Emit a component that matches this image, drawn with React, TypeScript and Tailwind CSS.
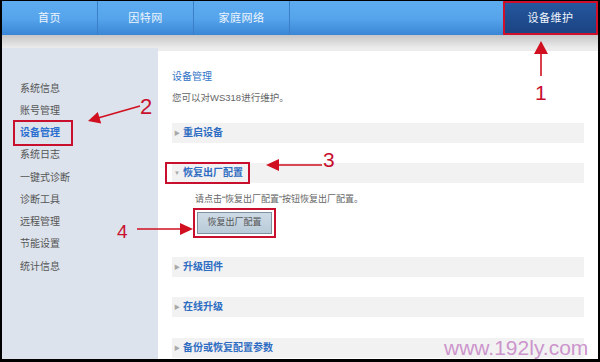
import React from "react";

const sideItems = [
  "系统信息",
  "账号管理",
  "设备管理",
  "系统日志",
  "一键式诊断",
  "诊断工具",
  "远程管理",
  "节能设置",
  "统计信息",
];

function Bar({ label, open, mt, boxed }: { label: string; open?: boolean; mt: string; boxed?: boolean }) {
  return (
    <div className={`relative h-[20px] bg-[#f2f2f2] flex items-center pl-[2px] ${mt}`}>
      <span className="text-[#a8a8a8] text-[6px] w-[9px] leading-none">{open ? "▼" : "▶"}</span>
      <span className="text-[10px] font-bold text-[#2d6cc2] leading-none">{label}</span>
      {boxed && (
        <div className="absolute left-[-7px] top-[-1px] w-[85px] h-[22px] border-2 border-[#c8102e]" />
      )}
    </div>
  );
}

export default function App() {
  return (
    <div className="relative w-[600px] h-[362px] bg-black pl-[2px] pr-[2px] pt-[1px] pb-[3px] font-['Liberation_Sans','Noto_Sans_CJK_SC',sans-serif] overflow-hidden">
      <div className="flex flex-col h-full bg-[#ececec]">
        {/* top nav */}
        <div className="h-[34px] flex bg-gradient-to-b from-[#5eacef] via-[#56a5ec] to-[#3a86d6] text-[#eef5fc] text-[11px] tracking-[0.5px]">
          <div className="w-[96px] border-r border-[#3c7ec8] flex items-center justify-center">首页</div>
          <div className="w-[96px] border-r border-[#3c7ec8] flex items-center justify-center">因特网</div>
          <div className="w-[96px] border-r border-[#3c7ec8] flex items-center justify-center">家庭网络</div>
          <div className="flex-1" />
          <div className="w-[95px] border-2 border-[#d0102a] bg-gradient-to-b from-[#25579f] to-[#1b4382] flex items-center justify-center">
            设备维护
          </div>
        </div>
        {/* gray band */}
        <div className="h-[13px] bg-gradient-to-b from-[#c6c6c6] to-[#ececec]" />
        {/* body */}
        <div className="flex flex-1 min-h-0">
          <div className="w-[156px] bg-[#dce3ec] pt-[29px] flex flex-col">
            {sideItems.map((s) => (
              <div
                key={s}
                className={`relative h-[22.25px] flex items-center pl-[18px] text-[10px] ${
                  s === "设备管理" ? "text-[#2a6fd0] font-bold" : "text-[#555555]"
                }`}
              >
                {s}
                {s === "设备管理" && (
                  <div className="absolute left-[11px] top-[-2px] w-[60px] h-[26px] border-2 border-[#c8102e]" />
                )}
              </div>
            ))}
          </div>
          <div className="flex-1 bg-white mt-[3px] pl-[14px] pr-[14px] pt-[17px] flex flex-col">
            <div className="h-[16px] flex items-center text-[10px] text-[#2f72c6]">设备管理</div>
            <div className="h-[16px] mt-[6px] flex items-center text-[9.5px] text-[#666666]">您可以对WS318进行维护。</div>
            <Bar label="重启设备" mt="mt-[17px]" />
            <Bar label="恢复出厂配置" open boxed mt="mt-[20px]" />
            <div className="h-[16px] mt-[9px] ml-[23px] flex items-center text-[9px] text-[#666666]">
              请点击“恢复出厂配置”按钮恢复出厂配置。
            </div>
            <div className="ml-[21px] w-[83px] h-[30px] border-2 border-[#c8102e] p-[2px]">
              <div className="w-full h-full bg-gradient-to-b from-[#cddbe6] to-[#b9cbd8] border border-[#7f919f] flex items-center justify-center text-[9px] text-[#555555]">
                恢复出厂配置
              </div>
            </div>
            <Bar label="升级固件" mt="mt-[19px]" />
            <Bar label="在线升级" mt="mt-[20px]" />
            <Bar label="备份或恢复配置参数" mt="mt-[21px]" />
          </div>
        </div>
      </div>

      {/* annotations */}
      <svg className="absolute inset-0 pointer-events-none" width="600" height="362">
        <g stroke="#d01020" strokeWidth="1.6" fill="#d01020">
          <line x1="541" y1="52" x2="541" y2="76" />
          <polygon points="541,41 534,54 548,54" stroke="none" />
          <line x1="140" y1="106" x2="98" y2="118" />
          <polygon points="88,121 101.2,123.5 97.8,111.9" stroke="none" />
          <line x1="322" y1="165" x2="277" y2="165" />
          <polygon points="266,165 279,159 279,171" stroke="none" />
          <line x1="137" y1="229" x2="182" y2="229" />
          <polygon points="193,229 180,223 180,235" stroke="none" />
        </g>
      </svg>
      <div className="absolute left-[535px] top-[82px] text-[21px] leading-none text-[#c8102e] font-['Liberation_Sans',sans-serif]">1</div>
      <div className="absolute left-[140px] top-[96px] text-[22px] leading-none text-[#c8102e] font-['Liberation_Sans',sans-serif]">2</div>
      <div className="absolute left-[323px] top-[149px] text-[21px] leading-none text-[#c8102e] font-['Liberation_Sans',sans-serif]">3</div>
      <div className="absolute left-[117px] top-[222px] text-[19px] leading-none text-[#c8102e] font-['Liberation_Sans',sans-serif]">4</div>
      <div className="absolute left-[444px] top-[337px] text-[21px] leading-none text-[#cc95cc] font-['Liberation_Sans',sans-serif]">www.192ly.com</div>
    </div>
  );
}
